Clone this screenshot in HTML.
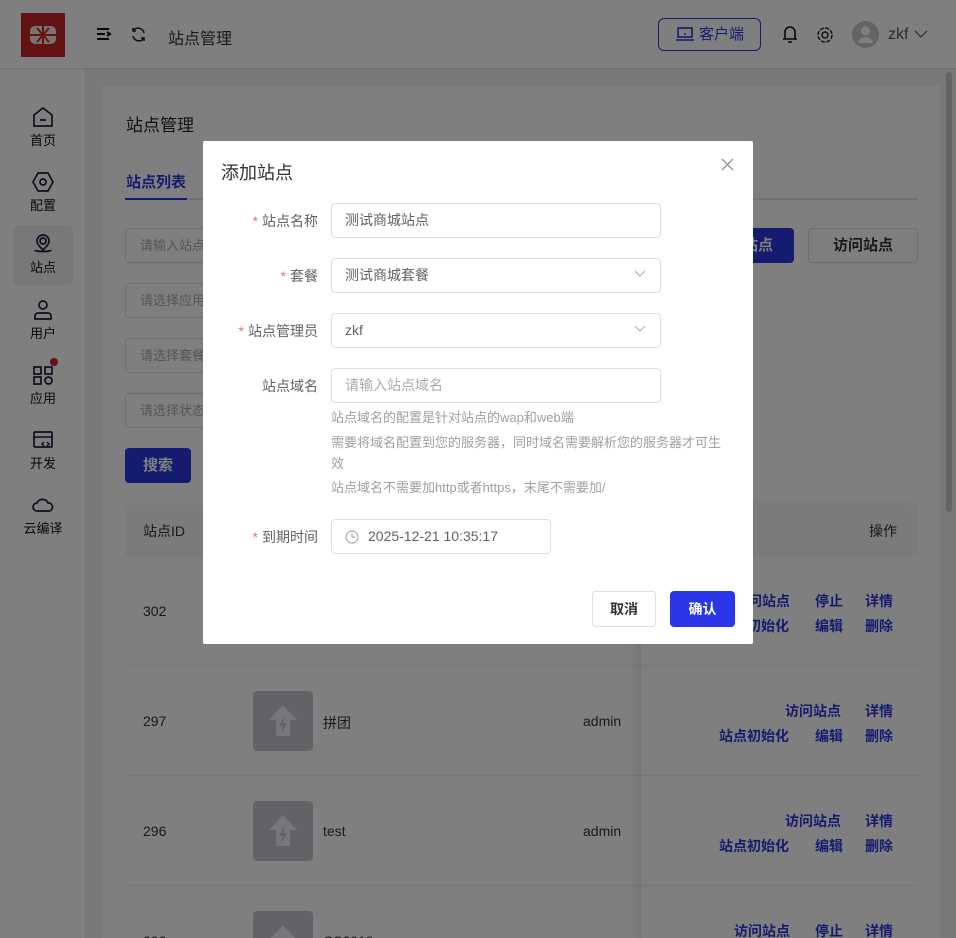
<!DOCTYPE html>
<html style="overflow:hidden;height:938px"><head><meta charset="utf-8"><style>
*{box-sizing:border-box;margin:0;padding:0}
html,body{overflow:hidden}
body{width:956px;height:938px;position:relative;font-family:"Liberation Sans","Noto Sans CJK SC",sans-serif;font-size:14px;color:#333;background:#f0f2f5}
.a{position:absolute}
.hdr{left:0;top:0;width:956px;height:69px;background:#fff;border-bottom:1px solid #e4e4e4}
.side{left:0;top:70px;width:86px;height:868px;background:#fff;border-right:1px solid #e8e8e8}
.nav{position:absolute;left:13px;width:60px;height:60px;text-align:center;font-size:13px;color:#111;border-radius:6px}
.nav svg{display:block;margin:8px auto 2px}
.card{left:102px;top:86px;width:838px;height:852px;background:#fff}
.inp{position:absolute;border:1px solid #dcdfe6;border-radius:4px;height:35px;font-size:13px;color:#a8abb2;padding:0 14px;line-height:33px;background:#fff}
.btnp{position:absolute;background:#2a36de;color:#fff;font-weight:bold;border-radius:4px;text-align:center}
.th{left:125px;top:505px;width:793px;height:51px;background:#f5f7fa}
.row{position:absolute;left:125px;width:793px;height:110px;border-bottom:1px solid #ebeef5}
.row>span{top:47px}
.op{position:absolute;color:#2a36de;font-weight:bold;font-size:14px}
.img{position:absolute;width:60px;height:60px;background:#c3c7cf;border-radius:4px}
.fix{left:641px;top:505px;width:277px;height:433px;box-shadow:-6px 0 8px rgba(0,0,0,.08)}
.mask{left:0;top:0;width:956px;height:938px;background:rgba(0,0,0,.5)}
.dlg{left:203px;top:141px;width:550px;height:503px;background:#fff;border-radius:2px}
.lbl{position:absolute;right:435px;font-size:14px;color:#606266;text-align:right;white-space:nowrap}
.lbl b{color:#f56c6c;font-weight:normal;margin-right:4px}
.fi{position:absolute;left:128px;width:330px;height:35px;border:1px solid #dcdfe6;border-radius:4px;padding:0 13px;line-height:33px;font-size:14px;color:#606266}
.chev{position:absolute;right:14px;top:11px}
.tip{position:absolute;left:128px;font-size:13px;color:#a0a0a0;width:400px;line-height:20px}
</style></head><body>
<div class="a hdr">
 <div class="a" style="left:21px;top:13px;width:44px;height:44px;background:#c8262a"><svg width="44" height="44"><rect x="9" y="13" width="26" height="18" rx="5" fill="#f5e6e6"/><path d="M22 13v18M9 22h26M16 15l6 7 6-7M16 29l6-7 6 7" stroke="#c8262a" stroke-width="2" fill="none"/></svg></div>
 <svg class="a" style="left:96px;top:27px" width="16" height="16"><path d="M1 2h12M1 7h8M1 12h12M11 5l3 2-3 2" stroke="#111" stroke-width="2" fill="none"/></svg>
 <svg class="a" style="left:130px;top:26px" width="17" height="17"><path d="M14 7A6 6 0 0 0 3 5M3 10a6 6 0 0 0 11 2M3 2v3h3M14 15v-3h-3" stroke="#222" stroke-width="1.6" fill="none"/></svg>
 <div class="a" style="left:168px;top:25px;font-size:16px;color:#333">站点管理</div>
 <div class="a" style="left:658px;top:18px;width:103px;height:33px;border:1px solid #2a36de;border-radius:6px;color:#2a36de;font-size:15px;line-height:31px;padding-left:40px">客户端<svg class="a" style="left:17px;top:8px" width="18" height="14"><rect x="2" y="1" width="14" height="9" fill="none" stroke="#2a36de" stroke-width="1.6"/><path d="M0 13h18M8 7h2" stroke="#2a36de" stroke-width="1.6"/></svg></div>
 <svg class="a" style="left:781px;top:24px" width="18" height="20"><path d="M4 15V8a5 5 0 0 1 10 0v7H2h14M7 18h4" stroke="#111" stroke-width="1.6" fill="none"/></svg>
 <svg class="a" style="left:816px;top:26px" width="18" height="18"><circle cx="9" cy="9" r="3" stroke="#222" stroke-width="1.5" fill="none"/><circle cx="9" cy="9" r="7" stroke="#222" stroke-width="1.5" fill="none" stroke-dasharray="4 1.5"/></svg>
 <div class="a" style="left:852px;top:21px;width:27px;height:27px;border-radius:50%;background:#c6c8cd"><svg width="27" height="27"><circle cx="13.5" cy="10" r="4.5" fill="#fff"/><path d="M6 22a7.5 6 0 0 1 15 0z" fill="#fff"/></svg></div>
 <div class="a" style="left:888px;top:26px;font-size:16px;color:#555">zkf</div>
 <svg class="a" style="left:914px;top:30px" width="14" height="9"><path d="M1 1l6 6 6-6" stroke="#666" stroke-width="1.3" fill="none"/></svg>
</div>
<div class="a side">
 <div class="nav" style="top:28px"><svg width="22" height="22"><path d="M2 9l9-7 9 7v11H2z M8 14h6" stroke="#1a1f3c" stroke-width="1.7" fill="none"/></svg>首页</div>
 <div class="nav" style="top:93px"><svg width="22" height="22"><path d="M6 2h10l5 9-5 9H6l-5-9z" stroke="#1a1f3c" stroke-width="1.7" fill="none"/><circle cx="11" cy="11" r="3" stroke="#1a1f3c" stroke-width="1.7" fill="none"/></svg>配置</div>
 <div class="nav" style="top:155px;background:#f0f0f0;height:60px"><svg width="22" height="22"><circle cx="11" cy="8" r="3" stroke="#1a1f3c" stroke-width="1.7" fill="none"/><path d="M11 17c-4-4-6-6-6-9a6 6 0 0 1 12 0c0 3-2 5-6 9zM3 17c0 2 16 2 16 0" stroke="#1a1f3c" stroke-width="1.7" fill="none"/></svg>站点</div>
 <div class="nav" style="top:221px"><svg width="22" height="22"><circle cx="11" cy="6" r="4" stroke="#1a1f3c" stroke-width="1.7" fill="none"/><path d="M3 20v-3a3 3 0 0 1 3-3h10a3 3 0 0 1 3 3v3z" stroke="#1a1f3c" stroke-width="1.7" fill="none"/></svg>用户</div>
 <div class="nav" style="top:286px"><svg width="22" height="22"><rect x="2" y="3" width="7" height="7" stroke="#1a1f3c" stroke-width="1.7" fill="none"/><rect x="13" y="3" width="7" height="7" stroke="#1a1f3c" stroke-width="1.7" fill="none"/><rect x="2" y="13" width="7" height="7" stroke="#1a1f3c" stroke-width="1.7" fill="none"/><circle cx="16.5" cy="16.5" r="3.5" stroke="#1a1f3c" stroke-width="1.7" fill="none"/></svg>应用<span class="a" style="left:37px;top:2px;width:8px;height:8px;border-radius:50%;background:#c8242e"></span></div>
 <div class="nav" style="top:351px"><svg width="22" height="22"><rect x="2" y="3" width="18" height="15" rx="1" stroke="#1a1f3c" stroke-width="1.7" fill="none"/><path d="M2 8h18M12 13l-2 2 2 2M15 13l2 2-2 2" stroke="#1a1f3c" stroke-width="1.5" fill="none"/></svg>开发</div>
 <div class="nav" style="top:416px"><svg width="22" height="22"><path d="M5 17a4 4 0 0 1 0-8 6 6 0 0 1 11 0 4 4 0 0 1 1 8z" stroke="#1a1f3c" stroke-width="1.7" fill="none"/></svg>云编译</div>
</div>
<div class="a card">
 <div class="a" style="left:24px;top:25px;font-size:17px;color:#222">站点管理</div>
 <div class="a" style="left:24px;top:85px;font-size:15px;color:#2a36de;font-weight:bold">站点列表</div>
 <div class="a" style="left:23px;top:112px;width:793px;height:2px;background:#e4e7ed"></div>
 <div class="a" style="left:23px;top:112px;width:62px;height:2px;background:#2a36de"></div>
 <div class="inp" style="left:23px;top:142px;width:200px">请输入站点名称</div>
 <div class="inp" style="left:23px;top:197px;width:200px">请选择应用</div>
 <div class="inp" style="left:23px;top:252px;width:200px">请选择套餐</div>
 <div class="inp" style="left:23px;top:307px;width:200px">请选择状态</div>
 <div class="btnp" style="left:23px;top:362px;width:66px;height:35px;line-height:35px;font-size:15px">搜索</div>
 <div class="btnp" style="left:590px;top:142px;width:102px;height:35px;line-height:35px;font-size:15px">添加站点</div>
 <div class="a" style="left:706px;top:142px;width:110px;height:35px;border:1px solid #dcdfe6;border-radius:4px;text-align:center;line-height:33px;font-size:15px;font-weight:bold;color:#333">访问站点</div>
</div>
<div class="a" style="left:944px;top:72px;width:10px;height:866px;background:#f0f0f0"><div style="margin:0 2px;height:440px;background:#c8c8c8;border-radius:4px"></div></div>
<div class="a th"><span class="a" style="left:18px;top:16px">站点ID</span><span class="a" style="left:744px;top:16px">操作</span></div>
<div class="row" style="top:556px"><span class="a" style="left:18px">302</span></div>
<div class="row" style="top:666px"><span class="a" style="left:18px">297</span><div class="img" style="left:128px;top:25px"><svg width="60" height="60"><path d="M30 14L16 29h7v16h14V29h7z" fill="#eceef1"/><path d="M32 24l-6 11h4l-2 8 6-11h-4z" fill="#c3c7cf"/></svg></div><span class="a" style="left:198px">拼团</span><span class="a" style="left:458px">admin</span></div>
<div class="row" style="top:776px"><span class="a" style="left:18px">296</span><div class="img" style="left:128px;top:25px"><svg width="60" height="60"><path d="M30 14L16 29h7v16h14V29h7z" fill="#eceef1"/><path d="M32 24l-6 11h4l-2 8 6-11h-4z" fill="#c3c7cf"/></svg></div><span class="a" style="left:198px">test</span><span class="a" style="left:458px">admin</span></div>
<div class="row" style="top:886px;height:52px;border:0"><span class="a" style="left:18px">293</span><div class="img" style="left:128px;top:25px;height:27px;border-radius:4px 4px 0 0"><svg width="60" height="27"><path d="M30 14L16 29h28z" fill="#eceef1"/></svg></div><span class="a" style="left:198px">CS2018</span></div>
<div class="a fix"></div>
<div class="op" style="left:734px;top:591px">访问站点</div><div class="op" style="left:815px;top:591px">停止</div><div class="op" style="left:865px;top:591px">详情</div>
<div class="op" style="left:719px;top:616px">站点初始化</div><div class="op" style="left:815px;top:616px">编辑</div><div class="op" style="left:865px;top:616px">删除</div>
<div class="op" style="left:785px;top:701px">访问站点</div><div class="op" style="left:865px;top:701px">详情</div>
<div class="op" style="left:719px;top:726px">站点初始化</div><div class="op" style="left:815px;top:726px">编辑</div><div class="op" style="left:865px;top:726px">删除</div>
<div class="op" style="left:785px;top:811px">访问站点</div><div class="op" style="left:865px;top:811px">详情</div>
<div class="op" style="left:719px;top:836px">站点初始化</div><div class="op" style="left:815px;top:836px">编辑</div><div class="op" style="left:865px;top:836px">删除</div>
<div class="op" style="left:734px;top:921px">访问站点</div><div class="op" style="left:815px;top:921px">停止</div><div class="op" style="left:865px;top:921px">详情</div>
<div class="a mask"></div>
<div class="a dlg">
 <div class="a" style="left:18px;top:18px;font-size:18px;color:#303133">添加站点</div>
 <svg class="a" style="left:518px;top:17px" width="13" height="13"><path d="M1 1l11 11M12 1L1 12" stroke="#909399" stroke-width="1.3"/></svg>
 <div class="lbl" style="top:70px"><b>*</b>站点名称</div>
 <div class="fi" style="top:62px">测试商城站点</div>
 <div class="lbl" style="top:125px"><b>*</b>套餐</div>
 <div class="fi" style="top:117px">测试商城套餐<svg class="chev" width="12" height="8"><path d="M1 1l5 5 5-5" stroke="#b0b3b8" stroke-width="1.2" fill="none"/></svg></div>
 <div class="lbl" style="top:180px"><b>*</b>站点管理员</div>
 <div class="fi" style="top:172px">zkf<svg class="chev" width="12" height="8"><path d="M1 1l5 5 5-5" stroke="#b0b3b8" stroke-width="1.2" fill="none"/></svg></div>
 <div class="lbl" style="top:235px">站点域名</div>
 <div class="fi" style="top:227px;color:#a8abb2">请输入站点域名</div>
 <div class="tip" style="top:267px">站点域名的配置是针对站点的wap和web端</div>
 <div class="tip" style="top:291px;width:398px;line-height:21px">需要将域名配置到您的服务器，同时域名需要解析您的服务器才可生效</div>
 <div class="tip" style="top:337px">站点域名不需要加http或者https，末尾不需要加/</div>
 <div class="lbl" style="top:386px"><b>*</b>到期时间</div>
 <div class="fi" style="top:378px;width:220px;padding-left:36px">2025-12-21 10:35:17<svg class="a" style="left:13px;top:10px" width="14" height="14"><circle cx="7" cy="7" r="6" stroke="#a8abb2" stroke-width="1.2" fill="none"/><path d="M7 3.5V7h3" stroke="#a8abb2" stroke-width="1.2" fill="none"/></svg></div>
 <div class="a" style="left:389px;top:450px;width:64px;height:36px;border:1px solid #dcdfe6;border-radius:4px;text-align:center;line-height:34px;font-weight:bold;color:#333">取消</div>
 <div class="btnp" style="left:467px;top:450px;width:65px;height:36px;line-height:36px;background:#2a36e8">确认</div>
</div>
</body></html>
